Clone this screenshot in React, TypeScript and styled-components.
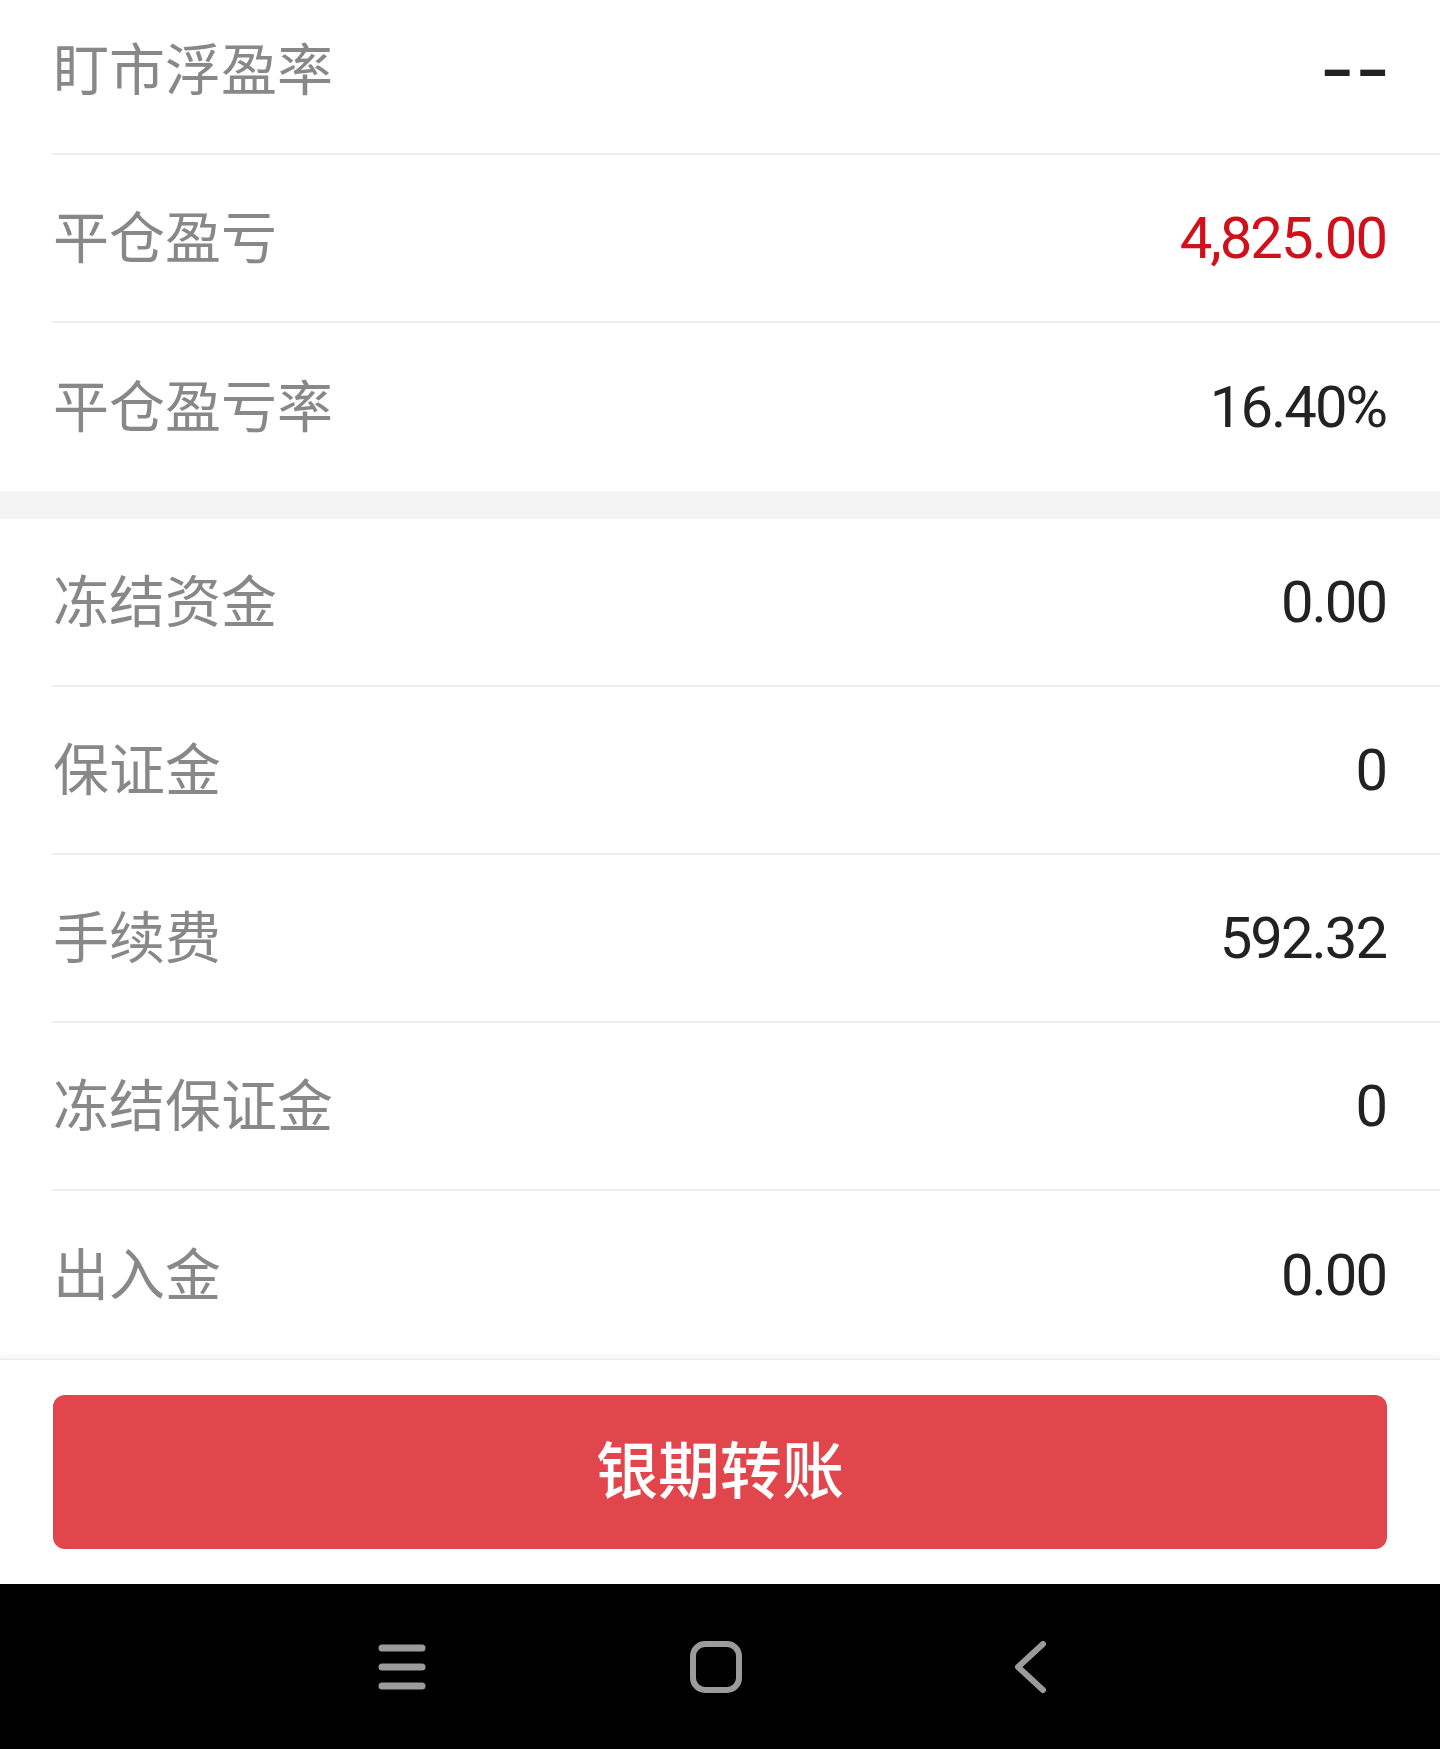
import { createGlobalStyle, styled } from 'styled-components'

type Item = {
  label: string
  value: string
  tone?: 'red' | 'dash'
}

const topItems: Item[] = [
  { label: '盯市浮盈率', value: '--', tone: 'dash' },
  { label: '平仓盈亏', value: '4,825.00', tone: 'red' },
  { label: '平仓盈亏率', value: '16.40%' },
]

const fundItems: Item[] = [
  { label: '冻结资金', value: '0.00' },
  { label: '保证金', value: '0' },
  { label: '手续费', value: '592.32' },
  { label: '冻结保证金', value: '0' },
  { label: '出入金', value: '0.00' },
]

function InfoList({ items, offset }: { items: Item[], offset?: boolean }) {
  return <List $offset={offset}>
    {items.map(item => (
      <Row key={item.label}>
        <Label>{item.label}</Label>
        {item.tone === 'dash'
          ? <Dash>{item.value}</Dash>
          : <Value $red={item.tone === 'red'}>{item.value}</Value>}
      </Row>
    ))}
  </List>
}

export default function App() {
  return <Page>
    <GlobalStyle />
    <InfoList items={topItems} offset />
    <Spacer />
    <InfoList items={fundItems} />

    <ActionBar>
      <TransferButton type="button">银期转账</TransferButton>
    </ActionBar>

    <NavBar>
      <NavSlot>
        <svg width="48" height="46" viewBox="0 0 48 46">
          <g stroke="#9b9b9b" strokeWidth="7" strokeLinecap="round">
            <line x1="4" y1="4" x2="44" y2="4" />
            <line x1="4" y1="23" x2="44" y2="23" />
            <line x1="4" y1="42" x2="44" y2="42" />
          </g>
        </svg>
      </NavSlot>
      <NavSlot>
        <svg width="52" height="52" viewBox="0 0 52 52">
          <rect x="3" y="3" width="46" height="46" rx="12" fill="none" stroke="#9b9b9b" strokeWidth="6" />
        </svg>
      </NavSlot>
      <NavSlot>
        <svg width="36" height="52" viewBox="0 0 36 52">
          <polyline points="31,3 6,26 31,49" fill="none" stroke="#9b9b9b" strokeWidth="6" strokeLinecap="round" strokeLinejoin="round" />
        </svg>
      </NavSlot>
    </NavBar>
  </Page>
}

const GlobalStyle = createGlobalStyle`
  html, body {
    margin: 0;
    padding: 0;
    background: #ffffff;
    overflow: hidden;
  }
  * {
    box-sizing: border-box;
  }
`
const Page = styled.div`
  width: 1440px;
  height: 1749px;
  display: flex;
  flex-direction: column;
  overflow: hidden;
  background: #ffffff;
`
const List = styled.div<{ $offset?: boolean }>`
  display: flex;
  flex-direction: column;
  margin-top: ${p => p.$offset ? '-13px' : '0'};
  background: #ffffff;
`
const Row = styled.div`
  height: 168px;
  margin-left: 52px;
  padding-left: 1px;
  padding-right: 54px;
  display: flex;
  align-items: center;
  justify-content: space-between;
  border-bottom: 2px solid #eeeeee;

  &:last-child {
    border-bottom: none;
  }
`
const Label = styled.span`
  font-family: "Noto Sans CJK SC", "Noto Sans", sans-serif;
  font-size: 56px;
  color: #888888;
  padding-bottom: 9px;
`
const Value = styled.span<{ $red?: boolean }>`
  font-family: Roboto, "Liberation Sans", sans-serif;
  font-size: 58px;
  letter-spacing: -2px;
  color: ${p => p.$red ? '#d0111b' : '#222222'};
`
const Dash = styled.span`
  font-family: Roboto, "Liberation Sans", sans-serif;
  font-size: 58px;
  font-weight: 700;
  color: #222222;
  transform: scaleX(1.55);
  transform-origin: right center;
  margin-right: -5px;
`
const Spacer = styled.div`
  height: 28px;
  flex-shrink: 0;
  background: #f4f4f4;
`
const ActionBar = styled.div`
  position: relative;
  padding: 35px 53px;
  background: #ffffff;
  border-top: 1px solid #ebebeb;
  box-shadow: 0 -3px 6px rgba(0, 0, 0, 0.05);
`
const TransferButton = styled.button`
  display: block;
  width: 100%;
  height: 154px;
  padding: 0 0 10px;
  border: none;
  border-radius: 12px;
  background: #e1464c;
  color: #ffffff;
  font-family: "Noto Sans CJK SC", "Noto Sans", sans-serif;
  font-size: 62px;
  font-weight: 500;
`
const NavBar = styled.div`
  height: 165px;
  flex-shrink: 0;
  background: #000000;
  display: grid;
  grid-template-columns: repeat(3, 314px);
  justify-content: center;
  align-items: center;
  padding-right: 8px;
`
const NavSlot = styled.div`
  display: flex;
  justify-content: center;
  align-items: center;
  height: 100%;
`
